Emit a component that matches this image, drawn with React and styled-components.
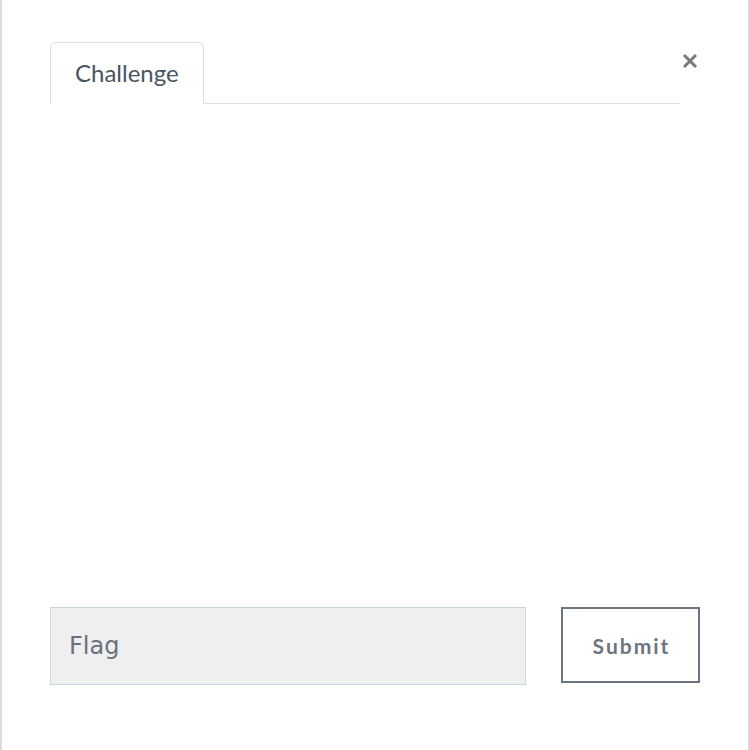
import React from "react";
import styled, { createGlobalStyle } from "styled-components";

const Global = createGlobalStyle`
  html, body { margin: 0; padding: 0; background: #fff; }
  * { box-sizing: border-box; }
`;

const Modal = styled.div`
  width: 750px;
  height: 750px;
  border-left: 2px solid #dadada;
  border-right: 2px solid #dadada;
  background: #fff;
  display: flex;
  flex-direction: column;
  padding: 42px 48px 65px;
`;

const Header = styled.div`
  display: flex;
  align-items: flex-start;
`;

const Tabs = styled.div`
  flex: 1;
  display: flex;
  border-bottom: 1px solid #dee2e6;
`;

const Tab = styled.div`
  height: 62px;
  margin-bottom: -1px;
  padding: 0 24px 3px 24px;
  display: flex;
  align-items: center;
  border: 1px solid #dee2e6;
  border-bottom: none;
  border-radius: 5px 5px 0 0;
  background: #fff;
  font-family: Lato, "Liberation Sans", sans-serif;
  font-size: 24px;
  color: #4a5561;
`;

const Close = styled.button`
  width: 20px;
  height: 20px;
  margin-top: 9px;
  padding: 0;
  border: none;
  background: transparent;
  display: flex;
  align-items: center;
  justify-content: center;
  cursor: pointer;
`;

const Body = styled.div`
  flex: 1;
`;

const Form = styled.form`
  display: flex;
  align-items: flex-start;
  gap: 35px;
`;

const FlagInput = styled.input`
  width: 476px;
  height: 78px;
  background: #efefef;
  border: 1px solid #ccd5dd;
  padding: 0 18px;
  font-family: "DejaVu Sans", sans-serif;
  font-size: 24px;
  color: #495057;
  outline: none;
  &::placeholder { color: #68727c; }
`;

const SubmitButton = styled.button`
  width: 139px;
  height: 76px;
  background: #fff;
  border: 2px solid #6b7682;
  font-family: Lato, "Liberation Sans", sans-serif;
  font-weight: 700;
  font-size: 21px;
  letter-spacing: 2px;
  color: #6c757d;
  padding: 0 0 0 2px;
  cursor: pointer;
`;

export default function App() {
  return (
    <>
      <Global />
      <Modal>
        <Header>
          <Tabs>
            <Tab>Challenge</Tab>
          </Tabs>
          <Close aria-label="Close">
            <svg width="16" height="16" viewBox="0 0 16 16">
              <path d="M2 2 L14 14 M14 2 L2 14" stroke="#7a7a7a" strokeWidth="3" strokeLinecap="butt" />
            </svg>
          </Close>
        </Header>
        <Body />
        <Form onSubmit={(e) => e.preventDefault()}>
          <FlagInput placeholder="Flag" />
          <SubmitButton type="submit">Submit</SubmitButton>
        </Form>
      </Modal>
    </>
  );
}
